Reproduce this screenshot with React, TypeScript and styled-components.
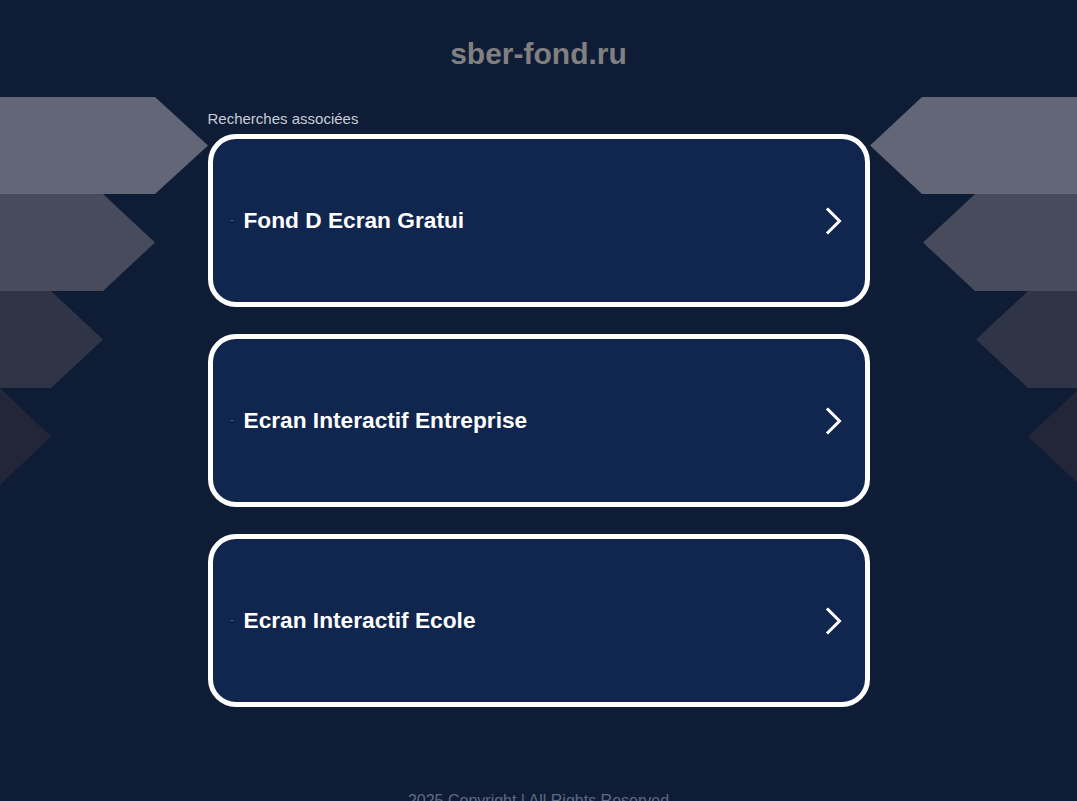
import React from 'react';
import styled, { createGlobalStyle } from 'styled-components';

const GlobalStyle = createGlobalStyle`
  html, body {
    margin: 0;
    padding: 0;
    background: #0f1c36;
    font-family: "Liberation Sans", Arial, sans-serif;
    overflow: hidden;
  }
`;

const Page = styled.div`
  position: relative;
  width: 100%;
  height: 801px;
  overflow: hidden;
`;

const Backdrop = styled.svg`
  position: absolute;
  top: 97px;
  left: 0;
  width: 100%;
  height: 390px;
  z-index: 0;
`;

const Content = styled.div`
  position: relative;
  z-index: 1;
  display: flex;
  flex-direction: column;
  align-items: center;
`;

const Domain = styled.h1`
  margin: 0;
  padding-top: 36px;
  height: 35px;
  line-height: 35px;
  font-size: 30px;
  font-weight: 700;
  color: #808080;
`;

const Section = styled.div`
  width: 662px;
  margin-top: 40px;
  display: flex;
  flex-direction: column;
`;

const Label = styled.div`
  font-size: 15px;
  line-height: 16px;
  color: #c8ccd6;
  margin-bottom: 7px;
`;

const List = styled.div`
  display: flex;
  flex-direction: column;
  gap: 27px;
`;

const Card = styled.a`
  box-sizing: border-box;
  height: 173px;
  border: 5px solid #ffffff;
  border-radius: 28px;
  background: #10264e;
  display: flex;
  align-items: center;
  padding: 0 22px 0 18px;
  text-decoration: none;
  color: #ffffff;
`;

const Dot = styled.span`
  width: 2px;
  height: 1px;
  background: #5a6a8c;
  margin-right: 11px;
`;

const CardText = styled.span`
  flex: 1;
  font-size: 22.7px;
  font-weight: 700;
`;

const Footer = styled.div`
  margin-top: 86px;
  font-size: 16px;
  line-height: 16px;
  color: #5f6a80;
`;

const Chevron = () => (
  <svg width="18" height="28" viewBox="0 0 18 28" fill="none">
    <path d="M3 2.5 L14.5 14 L3 25.5" stroke="#fff" strokeWidth="3" strokeLinecap="square" />
  </svg>
);

const items = ['Fond D Ecran Gratui', 'Ecran Interactif Entreprise', 'Ecran Interactif Ecole'];

// left edge: rect width, tip x; right edge: rect start x, tip x
const shapes = [
  { y: 0, lw: 155, lt: 208, rs: 922, rt: 870, fill: '#636676' },
  { y: 97, lw: 103, lt: 155, rs: 975, rt: 923, fill: '#474b5c' },
  { y: 194, lw: 51, lt: 103, rs: 1028, rt: 976, fill: '#2f3446' },
  { y: 291, lw: 0, lt: 51, rs: 1080, rt: 1028, fill: '#222638' },
];

export default function App() {
  const W = 1077;
  return (
    <>
      <GlobalStyle />
      <Page>
        <Backdrop viewBox={`0 0 ${W} 390`} preserveAspectRatio="none">
          {shapes.map((s) => (
            <React.Fragment key={s.y}>
              <polygon
                points={`0,${s.y} ${s.lw},${s.y} ${s.lt},${s.y + 48.5} ${s.lw},${s.y + 97} 0,${s.y + 97}`}
                fill={s.fill}
              />
              <polygon
                points={`${W},${s.y} ${s.rs},${s.y} ${s.rt},${s.y + 48.5} ${s.rs},${s.y + 97} ${W},${s.y + 97}`}
                fill={s.fill}
              />
            </React.Fragment>
          ))}
        </Backdrop>
        <Content>
          <Domain>sber-fond.ru</Domain>
          <Section>
            <Label>Recherches associées</Label>
            <List>
              {items.map((t) => (
                <Card key={t} href="#">
                  <Dot />
                  <CardText>{t}</CardText>
                  <Chevron />
                </Card>
              ))}
            </List>
          </Section>
          <Footer>2025 Copyright | All Rights Reserved</Footer>
        </Content>
      </Page>
    </>
  );
}
